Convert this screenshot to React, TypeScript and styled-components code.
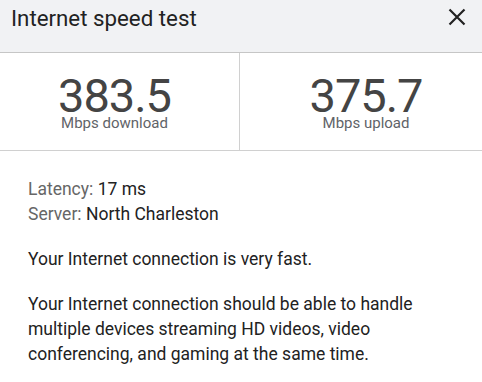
import React from "react";
import styled, { createGlobalStyle } from "styled-components";

const Global = createGlobalStyle`
  html, body { margin: 0; padding: 0; background: #fff; }
  body { font-family: Roboto, "Noto Sans", sans-serif; width: 482px; height: 382px; overflow: hidden; }
`;

const Dialog = styled.div`
  width: 482px;
  display: flex;
  flex-direction: column;
`;

const Header = styled.div`
  height: 53px;
  box-sizing: border-box;
  background: #f1f2f4;
  border-bottom: 1px solid #c6c6c6;
  display: flex;
  align-items: flex-start;
  justify-content: space-between;
  padding: 4px 16px 0 11px;
`;

const Title = styled.h1`
  margin: 0;
  font-size: 22.3px;
  font-weight: 400;
  color: #222;
  line-height: 28px;
`;

const Close = styled.button`
  border: none;
  background: none;
  padding: 0;
  margin-top: 4px;
  width: 18px;
  height: 18px;
  display: flex;
  cursor: pointer;
`;

const Stats = styled.div`
  display: grid;
  grid-template-columns: 240px 1fr;
  border-bottom: 1px solid #d0d0d0;
  height: 98px;
  box-sizing: border-box;
`;

const Stat = styled.div<{ $side: "left" | "right" }>`
  display: flex;
  flex-direction: column;
  align-items: center;
  padding-top: 23px;
  padding-left: ${(p) => (p.$side === "right" ? "10px" : "0")};
  padding-right: ${(p) => (p.$side === "left" ? "10px" : "0")};
  border-right: ${(p) => (p.$side === "left" ? "1px solid #d0d0d0" : "none")};
`;

const Value = styled.div`
  font-size: 47px;
  letter-spacing: -1px;
  line-height: 40px;
  color: #444;
`;

const Unit = styled.div`
  font-size: 15px;
  line-height: 14px;
  color: #5f6368;
`;

const Body = styled.div`
  padding: 26px 28px 0;
  font-size: 17.5px;
  color: #222;
`;

const InfoLine = styled.div`
  line-height: 25px;
`;

const Label = styled.span`
  color: #666;
`;

const Paragraph = styled.p`
  margin: 20px 0 0;
  line-height: 25px;
`;

export default function App() {
  return (
    <>
      <Global />
      <Dialog>
        <Header>
          <Title>Internet speed test</Title>
          <Close aria-label="Close">
            <svg width="18" height="18" viewBox="0 0 18 18">
              <path d="M1.5 1.5 L16.5 16.5 M16.5 1.5 L1.5 16.5" stroke="#222" strokeWidth="2.2" />
            </svg>
          </Close>
        </Header>
        <Stats>
          <Stat $side="left">
            <Value>383.5</Value>
            <Unit>Mbps download</Unit>
          </Stat>
          <Stat $side="right">
            <Value>375.7</Value>
            <Unit>Mbps upload</Unit>
          </Stat>
        </Stats>
        <Body>
          <InfoLine>
            <Label>Latency:</Label> 17 ms
          </InfoLine>
          <InfoLine>
            <Label>Server:</Label> North Charleston
          </InfoLine>
          <Paragraph>Your Internet connection is very fast.</Paragraph>
          <Paragraph>
            Your Internet connection should be able to handle multiple devices streaming HD videos, video
            conferencing, and gaming at the same time.
          </Paragraph>
        </Body>
      </Dialog>
    </>
  );
}
